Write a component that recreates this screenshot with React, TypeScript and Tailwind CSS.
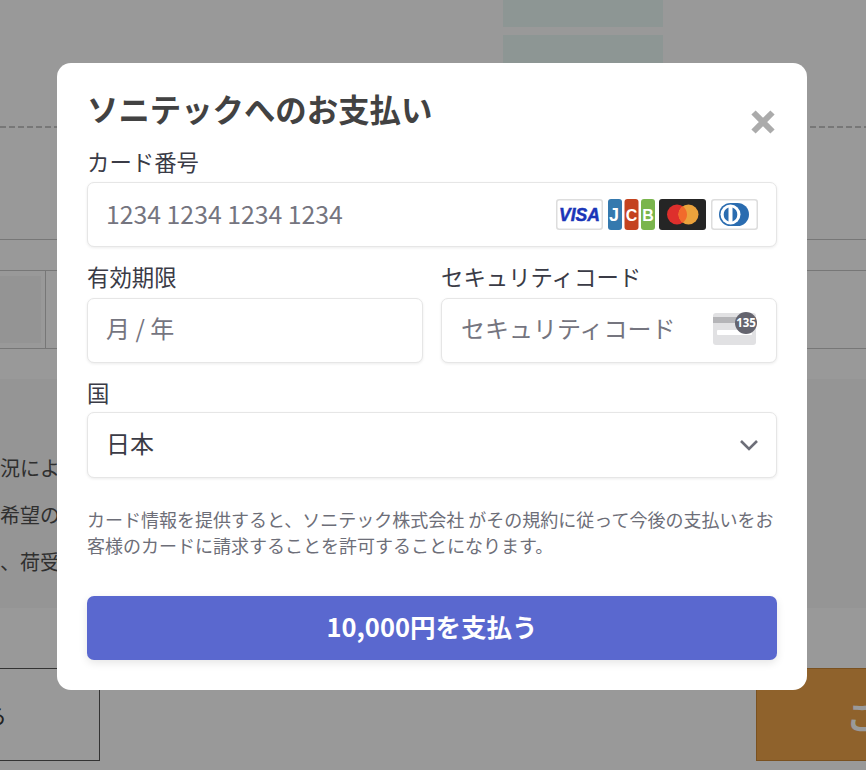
const FONT = "font-['Noto_Sans_CJK_JP','Noto_Sans',sans-serif]";

function CardLogos() {
  return (
    <div className="flex items-center gap-[4.7px]">
      {/* visa */}
      <svg width="47" height="31" viewBox="0 0 47 31">
        <rect x="0.75" y="0.75" width="45.5" height="29.5" rx="2.5" fill="#fff" stroke="#ddd" strokeWidth="1.5" />
        <text x="23.5" y="21.5" textAnchor="middle" fontFamily="Liberation Sans" fontWeight="700" fontStyle="italic" fontSize="17.5" stroke="#1a35b8" strokeWidth="0.5" fill="#1a35b8">VISA</text>
      </svg>
      {/* jcb */}
      <svg width="47" height="31" viewBox="0 0 47 31">
        <rect x="0" y="0" width="14" height="31" rx="3" fill="#3579ae" />
        <rect x="16.5" y="0" width="14" height="31" rx="3" fill="#c4431f" />
        <rect x="33" y="0" width="14" height="31" rx="3" fill="#7ab54d" />
        <text x="6" y="22" textAnchor="middle" fontFamily="Liberation Sans" fontWeight="700" fontSize="18" fill="#fff">J</text>
        <text x="23.5" y="21.5" textAnchor="middle" fontFamily="Liberation Sans" fontWeight="700" fontSize="16" fill="#fff">C</text>
        <text x="40" y="21.5" textAnchor="middle" fontFamily="Liberation Sans" fontWeight="700" fontSize="16" fill="#fff">B</text>
      </svg>
      {/* mastercard */}
      <svg width="47" height="31" viewBox="0 0 47 31">
        <rect width="47" height="31" rx="3" fill="#252525" />
        <circle cx="18" cy="15.5" r="10" fill="#de2f2c" />
        <circle cx="29.5" cy="15.5" r="10" fill="#eba23c" />
        <path d="M23.75 7.3a10 10 0 0 1 0 16.4a10 10 0 0 1 0-16.4z" fill="#f26a2b" />
      </svg>
      {/* diners */}
      <svg width="47" height="31" viewBox="0 0 47 31">
        <rect x="0.75" y="0.75" width="45.5" height="29.5" rx="2.5" fill="#fff" stroke="#ddd" strokeWidth="1.5" />
        <rect x="8" y="4" width="30" height="23" rx="11.5" fill="#2a6cb0" />
        <circle cx="19.5" cy="15.5" r="10" fill="#fff" />
        <path d="M17.5 8.5a7.5 7.5 0 0 0 0 14z M21.5 8.5a7.5 7.5 0 0 1 0 14z" fill="#2a6cb0" />
      </svg>
    </div>
  );
}

function CvcIcon() {
  return (
    <svg width="46" height="37" viewBox="0 0 46 37">
      <rect x="2" y="1" width="43" height="32" rx="3" fill="#e1e1e3" />
      <rect x="2" y="5" width="43" height="6" fill="#b5b5b8" />
      <rect x="6" y="18" width="35" height="5" rx="1" fill="#fff" />
      <circle cx="35" cy="11" r="11" fill="#64646e" />
      <text x="35" y="15" textAnchor="middle" fontFamily="Noto Sans" fontWeight="700" fontSize="11.5" fill="#fff">135</text>
    </svg>
  );
}

function Field({ children, className = "" }: { children: React.ReactNode; className?: string }) {
  return (
    <div className={"flex items-center rounded-[7px] border border-[#e6e6e6] bg-white shadow-[0_1px_3px_rgba(0,0,0,0.08)] " + className}>
      {children}
    </div>
  );
}

function PaymentModal() {
  return (
    <div className={"absolute left-[57px] top-[63px] h-[627px] w-[750px] rounded-[14px] bg-white px-[30px] pt-[24px] " + FONT}>
      <h1 className="h-[44px] whitespace-nowrap text-[31.4px] leading-[44px] font-bold text-[#424242]">ソニテックへのお支払い</h1>
      <button className="absolute right-[31px] top-[46px] text-[#ababab]">
        <svg width="26" height="26" viewBox="0 0 26 26">
          <path d="M3.5 3.5 L22.5 22.5 M22.5 3.5 L3.5 22.5" stroke="currentColor" strokeWidth="6" />
        </svg>
      </button>

      <label className="mt-[17px] block h-[30px] text-[22.4px] leading-[26px] text-[#3a3b46]">カード番号</label>
      <Field className="mt-[4px] h-[65px] justify-between pl-[18px] pr-[18px]">
        <span className="mb-[2px] text-[24.8px] text-[#75757f]">1234 1234 1234 1234</span>
        <CardLogos />
      </Field>

      <div className="mt-[16px] grid grid-cols-2 gap-[18px]">
        <div>
          <label className="block h-[30px] text-[22.4px] leading-[26px] text-[#3a3b46]">有効期限</label>
          <Field className="mt-[5px] h-[65px] pl-[18px]">
            <span className="mb-[6px] text-[24px] text-[#75757f]">月 / 年</span>
          </Field>
        </div>
        <div>
          <label className="block h-[30px] text-[22.4px] leading-[26px] text-[#3a3b46]">セキュリティコード</label>
          <Field className="mt-[5px] h-[65px] justify-between pl-[19px] pr-[19px]">
            <span className="mb-[6px] text-[24px] text-[#75757f]">セキュリティコード</span>
            <CvcIcon />
          </Field>
        </div>
      </div>

      <label className="mt-[16px] block h-[30px] text-[22.4px] leading-[26px] text-[#3a3b46]">国</label>
      <Field className="mt-[3px] h-[66px] justify-between pl-[18px] pr-[17px]">
        <span className="mb-[4px] text-[24px] text-[#3a3b46]">日本</span>
        <svg width="20" height="12" viewBox="0 0 20 12" fill="none">
          <path d="M2 2 L10 10 L18 2" stroke="#6d6e78" strokeWidth="2.6" />
        </svg>
      </Field>

      <p className="mt-[28px] text-[18px] leading-[26px] text-[#6d6e78]">
        カード情報を提供すると、ソニテック株式会社 がその規約に従って今後の支払いをお客様のカードに請求することを許可することになります。
      </p>

      <button className="mt-[38px] flex h-[64px] w-full items-center justify-center rounded-[7px] bg-[#5a68cf] pb-[4px] text-[25.5px] font-bold text-white shadow-[0_3px_8px_rgba(0,0,0,0.1)]">
        10,000円を支払う
      </button>
    </div>
  );
}

export default function App() {
  return (
    <div className={"relative h-[770px] w-[866px] overflow-hidden bg-[#999999] text-[#333] " + FONT}>
      {/* page behind the dialog */}
      <div className="h-[126px] pl-[503px]">
        <div className="h-[27px] w-[160px] bg-[#8d9694]" />
        <div className="mt-[8px] h-[60px] w-[160px] bg-[#8d9694]" />
      </div>
      <div className="h-[2px] bg-[repeating-linear-gradient(90deg,#777_0_6px,transparent_6px_9px)]" />
      <div className="mt-[111px] h-[31px] border-t border-[#777]" />
      <div className="flex h-[79px] border-y border-[#777]">
        <div className="w-[46px] border-r border-[#777] py-[5px] pr-[4px]">
          <div className="h-full bg-[#949494]" />
        </div>
      </div>
      <div className="mt-[30px] h-[229px] bg-[#959595] pt-[65px] text-[20px] leading-[47px] text-[#2f2f2f]">
        <p>況によ</p>
        <p>希望の</p>
        <p>、荷受</p>
      </div>
      <div className="mt-[60px] flex h-[93px] justify-between">
        <div className="flex w-[100px] items-center justify-end overflow-hidden border border-[#333] border-l-0 pr-[92px] text-[22px] text-[#222]">
          <span className="shrink-0">ら</span>
        </div>
        <div className="flex w-[110px] items-center overflow-hidden border border-[#7a5120] border-r-0 bg-[#8f622c] pl-[90px] text-[32px] font-bold text-[#9a9a9a]">
          <span className="shrink-0">ご</span>
        </div>
      </div>

      <PaymentModal />
    </div>
  );
}
